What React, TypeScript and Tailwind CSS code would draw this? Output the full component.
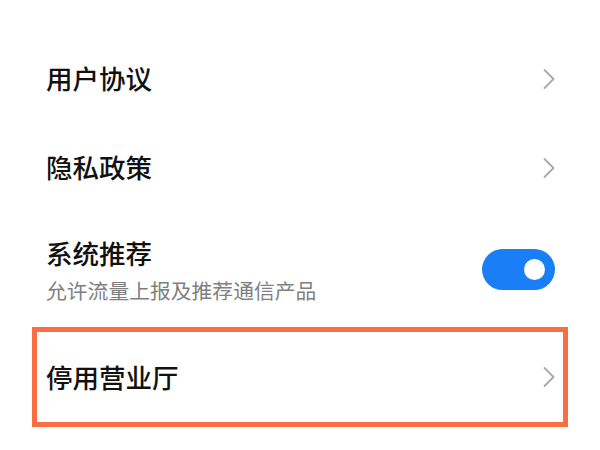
import React from "react";

const Chevron = () => (
  <svg width="14" height="22" viewBox="0 0 14 22" fill="none" className="shrink-0">
    <path d="M2.5 2 L11.5 11 L2.5 20" stroke="#a8a8a8" strokeWidth="1.8" strokeLinecap="round" strokeLinejoin="round" />
  </svg>
);

export default function App() {
  const font = { fontFamily: '"Noto Sans CJK SC", "Noto Sans", sans-serif' };
  return (
    <div className="w-[600px] h-[450px] bg-white overflow-hidden" style={font}>
      <div className="h-[34px]" />
      <div className="h-[89px] flex items-center justify-between pl-[46px] pr-[44px]">
        <span className="text-[26.5px] leading-none font-medium text-[#111111]">用户协议</span>
        <Chevron />
      </div>
      <div className="h-[89px] flex items-center justify-between pl-[46px] pr-[44px]">
        <span className="text-[26.5px] leading-none font-medium text-[#111111]">隐私政策</span>
        <Chevron />
      </div>
      <div className="h-[115px] flex items-center justify-between pl-[46px] pr-[45px]">
        <div className="flex flex-col">
          <span className="text-[26.5px] leading-none font-medium text-[#111111] mt-[2px]">系统推荐</span>
          <span className="text-[20.8px] leading-none text-[#7f7f7f] mt-[13px]">允许流量上报及推荐通信产品</span>
        </div>
        <div className="w-[73px] h-[41px] rounded-full bg-[#1a7ff6] flex items-center justify-end pr-[10px]">
          <div className="w-[21px] h-[21px] rounded-full bg-white" />
        </div>
      </div>
      <div className="ml-[32px] w-[536px] h-[100px] border-[5px] border-[#fb6e44] flex items-center justify-between pl-[9px] pr-[7px]">
        <span className="text-[26.5px] leading-none font-medium text-[#111111]">停用营业厅</span>
        <Chevron />
      </div>
    </div>
  );
}
